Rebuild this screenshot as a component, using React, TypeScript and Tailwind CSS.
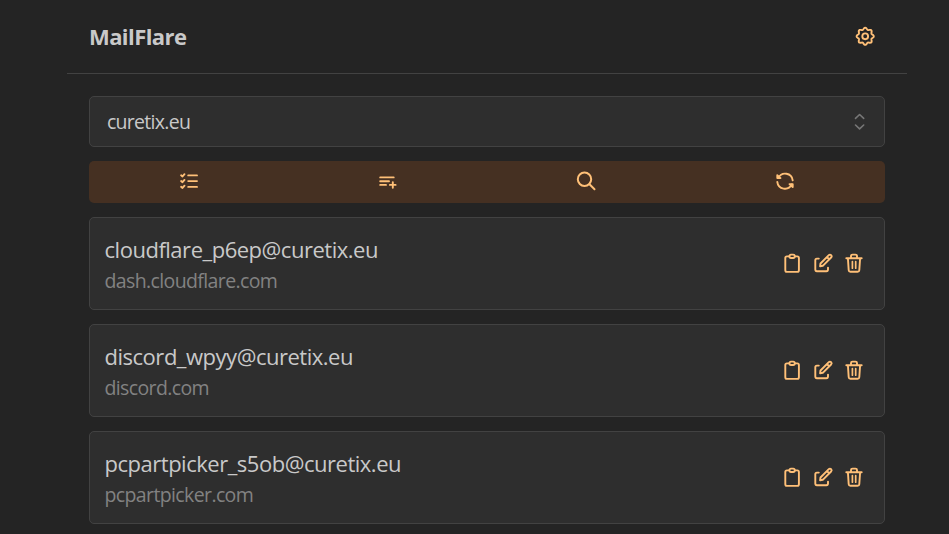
import type { ReactNode } from "react";

type IconProps = { children: ReactNode; width?: number };

function Icon({ children, width = 2 }: IconProps) {
  return (
    <svg className="block size-6 shrink-0" viewBox="0 0 24 24" fill="none" stroke="currentColor" strokeWidth={width} strokeLinecap="round" strokeLinejoin="round">
      {children}
    </svg>
  );
}

const gearOutline = Array.from({ length: 96 }, (_, i) => {
  const angle = (i / 96) * Math.PI * 2;
  const radius = 7.7 + 0.9 * Math.cos(angle * 8);
  return `${(12.2 + radius * Math.cos(angle)).toFixed(2)},${(12.3 + radius * Math.sin(angle)).toFixed(2)}`;
}).join(" ");

const Gear = () => (
  <Icon width={1.9}>
    <polygon points={gearOutline} />
    <circle cx="12.2" cy="12.3" r="2.9" />
  </Icon>
);

const Checklist = () => (
  <Icon width={1.9}>
    <path d="M12.200 6.400h8.800M12.200 12.100h8.800M12.200 17.900h8.800" />
    <path d="m5.100 6.300 1.400 1.200 2-2.300M5.100 12l1.400 1.200 2-2.300M5.100 17.800l1.400 1.200 2-2.300" />
  </Icon>
);

const ListAdd = () => (
  <Icon width={1.9}>
    <path d="M5.200 8.400h13.500M5.200 12.200h8.800M5.200 15.900h5.800M14.900 15.900h5.700M17.800 13.100v5.700" />
  </Icon>
);

const Search = () => (
  <Icon>
    <circle cx="10.500" cy="10.300" r="6.700" />
    <path d="m15.500 15.300 5 5" />
  </Icon>
);

const Refresh = () => (
  <Icon width={1.9}>
    <path d="M5.400 8.800A7.600 7.600 0 0 1 19.700 11.300M18.700 15.400A7.600 7.600 0 0 1 4.300 12.900" />
    <path d="M4.300 6.200v2.900h3.200ZM19.700 18v-2.900h-3.200Z" fill="currentColor" />
  </Icon>
);

const Clipboard = () => (
  <Icon width={1.9}>
    <path d="M9 5.400H6.900A1.600 1.600 0 0 0 5.300 7v12.300a1.600 1.600 0 0 0 1.600 1.600h10.400a1.600 1.600 0 0 0 1.600-1.600V7a1.600 1.600 0 0 0-1.600-1.600h-2.100" />
    <path d="M9.400 5.300c0-1 .7-1.700 1.600-1.700h2.200c1 0 1.600.7 1.600 1.700S14.200 7 13.200 7H11c-1 0-1.600-.7-1.600-1.700Z" />
  </Icon>
);

const Edit = () => (
  <Icon width={1.9}>
    <path d="M7.800 7.600H5.900a1.600 1.600 0 0 0-1.600 1.600v9.400a1.600 1.600 0 0 0 1.600 1.600h9.500a1.600 1.600 0 0 0 1.600-1.600v-2" />
    <path d="m9.500 12.500 8.300-8.300a1.500 1.500 0 0 1 2.300 2.300L11.800 14.800 9.100 15.400ZM16.100 6.100l2.200 2.200" />
  </Icon>
);

const Trash = () => (
  <Icon width={1.9}>
    <path d="M4.300 7.200h15.400M5.900 7.200l.8 12a1.700 1.700 0 0 0 1.700 1.600h7.200a1.700 1.700 0 0 0 1.700-1.600l.8-12M9 6.900V5.100a1.500 1.500 0 0 1 1.500-1.500h3A1.500 1.500 0 0 1 15 5.100v1.800" />
    <path d="M10.400 10.600v6.600M13.700 10.600v6.600" strokeWidth="1.700" />
  </Icon>
);

const aliases = [
  { address: "cloudflare_p6ep@curetix.eu", site: "dash.cloudflare.com" },
  { address: "discord_wpyy@curetix.eu", site: "discord.com" },
  { address: "pcpartpicker_s5ob@curetix.eu", site: "pcpartpicker.com" },
];

export default function App() {
  return (
    <div className="h-[534px] overflow-hidden bg-[#242424] pr-[42px] pl-[67px] font-['Open_Sans','Noto_Sans',sans-serif] text-[#c9c9c9]">
      <header className="flex h-[74px] items-center justify-between border-b border-[#424242] pr-[30px] pb-[2px] pl-[22px]">
        <h1 className="text-[22px] leading-[30px] font-bold tracking-[-0.58px]">MailFlare</h1>
        <button className="text-[#ffc078]"><Gear /></button>
      </header>
      <main className="flex flex-col gap-[14px] px-[22px] pt-[22px]">
        <button className="flex h-[51px] items-center justify-between rounded-[5px] border border-[#424242] bg-[#2e2e2e] pr-[12px] pl-[17px]">
          <span className="text-[19.500px] leading-[30px] tracking-[-0.720px]">curetix.eu</span>
          <span className="text-[#777777]"><Icon width={1.6}><path d="m7.500 8.400 4.100-3.900 4.100 3.900M7.500 15l4.100 3.900 4.100-3.900" /></Icon></span>
        </button>
        <nav className="grid h-[42px] grid-cols-4 place-items-center rounded-[5px] bg-[#453022] pr-px pb-[2px] text-[#ffc078]">
          <button><Checklist /></button>
          <button><ListAdd /></button>
          <button><Search /></button>
          <button><Refresh /></button>
        </nav>
        {aliases.map((a) => (
          <article key={a.address} className="flex h-[93px] shrink-0 items-center justify-between rounded-[5px] border border-[#424242] bg-[#2e2e2e] pr-[18px] pl-[14.500px]">
            <div className="pt-px">
              <p className="text-[22px] leading-[32px] tracking-[-0.480px]">{a.address}</p>
              <p className="pt-px text-[19.500px] leading-[30px] tracking-[-0.620px] text-[#828282]">{a.site}</p>
            </div>
            <div className="flex gap-[7px] pb-[2px] text-[#ffc078]">
              <button><Clipboard /></button>
              <button><Edit /></button>
              <button><Trash /></button>
            </div>
          </article>
        ))}
      </main>
    </div>
  );
}
